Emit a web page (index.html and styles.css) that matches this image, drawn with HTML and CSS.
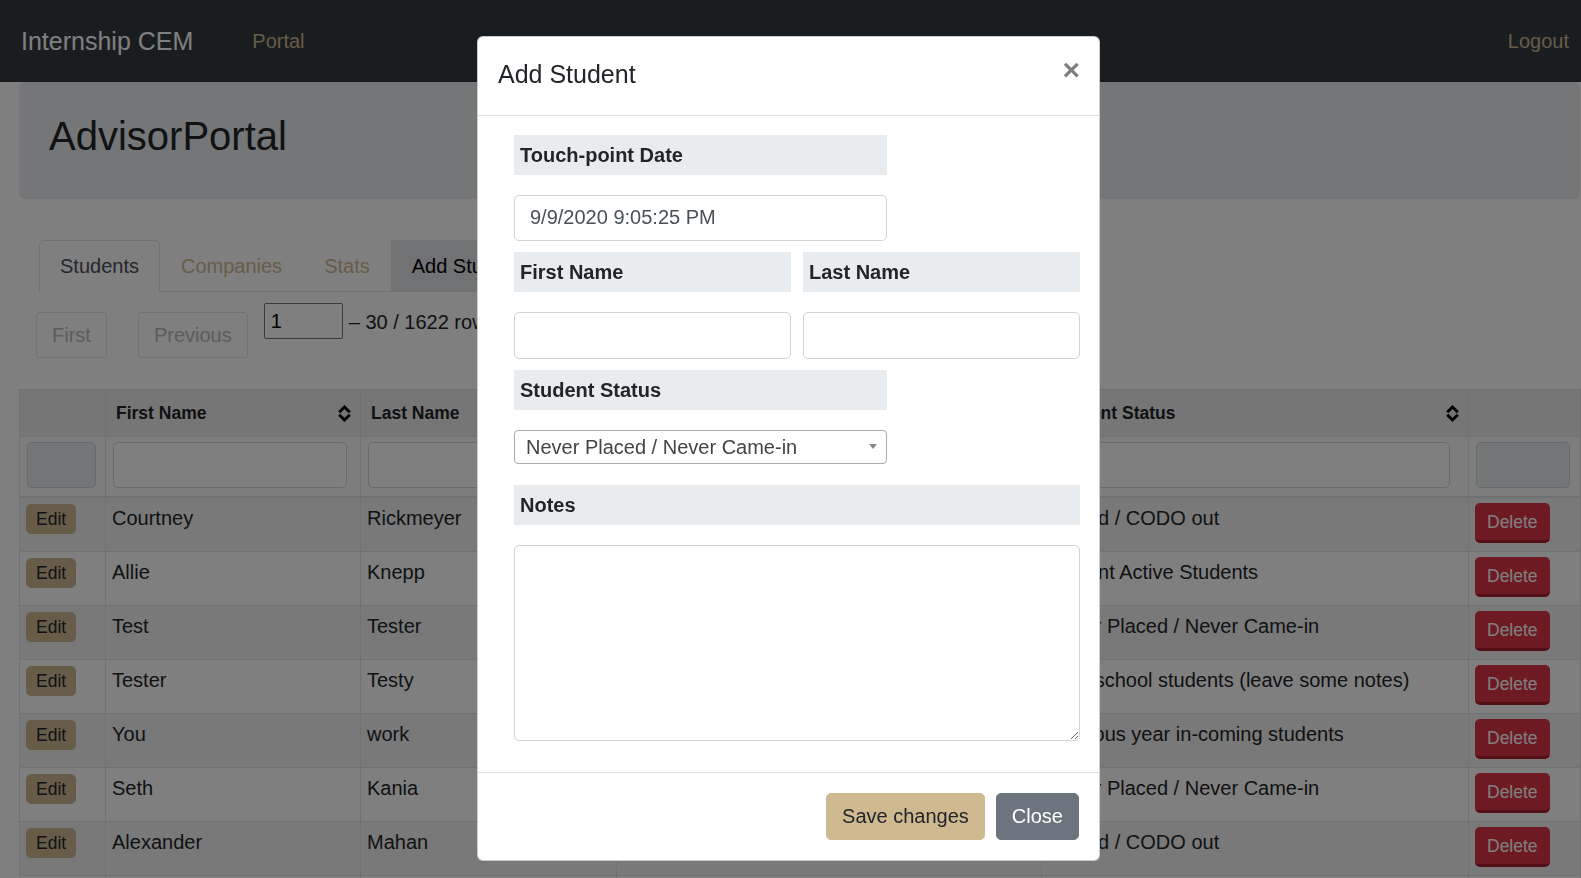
FILE: index.html
```html
<!DOCTYPE html>
<html lang="en">
<head>
<meta charset="utf-8">
<title>AdvisorPortal</title>
<link rel="stylesheet" href="styles.css">
</head>
<body>
<nav class="topbar">
  <a class="brand" href="#">Internship CEM</a>
  <a class="top-link" href="#">Portal</a>
  <a class="top-link logout" href="#">Logout</a>
</nav>
<main class="page">
  <div class="jumbo"><h1 class="jumbo-title">AdvisorPortal</h1></div>
  <ul class="tabs">
    <li class="tab active">Students</li>
    <li class="tab">Companies</li>
    <li class="tab">Stats</li>
    <li class="tab add">Add Student</li>
  </ul>
  <div class="pager">
    <button class="pg-btn">First</button>
    <button class="pg-btn prev">Previous</button>
    <input class="pg-input" value="1">
    <span class="pg-text">– 30 / 1622 rows</span>
  </div>
  <table class="grid">
    <colgroup>
      <col class="c-act"><col class="c-first"><col class="c-last"><col class="c-date"><col class="c-status"><col class="c-del">
    </colgroup>
    <thead>
      <tr class="head-row">
        <th></th>
        <th><div class="th-in"><span>First Name</span><svg class="sort" viewBox="0 0 15 19"><path d="M2.2 8.2 L7.5 3 L12.8 8.2 M2.2 10.8 L7.5 16 L12.8 10.8" fill="none" stroke="#000" stroke-width="3"/></svg></div></th>
        <th><div class="th-in"><span>Last Name</span><svg class="sort" viewBox="0 0 15 19"><path d="M2.2 8.2 L7.5 3 L12.8 8.2 M2.2 10.8 L7.5 16 L12.8 10.8" fill="none" stroke="#000" stroke-width="3"/></svg></div></th>
        <th><div class="th-in"><span>Touch-point Date</span><svg class="sort" viewBox="0 0 15 19"><path d="M2.2 8.2 L7.5 3 L12.8 8.2 M2.2 10.8 L7.5 16 L12.8 10.8" fill="none" stroke="#000" stroke-width="3"/></svg></div></th>
        <th><div class="th-in"><span>Student Status</span><svg class="sort" viewBox="0 0 15 19"><path d="M2.2 8.2 L7.5 3 L12.8 8.2 M2.2 10.8 L7.5 16 L12.8 10.8" fill="none" stroke="#000" stroke-width="3"/></svg></div></th>
        <th></th>
      </tr>
      <tr class="filter-row">
        <td><input class="f-input dis w-act" disabled></td>
        <td><input class="f-input w-name"></td>
        <td><input class="f-input w-name"></td>
        <td><input class="f-input w-date"></td>
        <td><input class="f-input w-status"></td>
        <td><input class="f-input dis w-del" disabled></td>
      </tr>
    </thead>
    <tbody>
      <tr><td><button class="btn-edit">Edit</button></td><td>Courtney</td><td>Rickmeyer</td><td>9/1/2020 10:12:40 AM</td><td>Placed / CODO out</td><td><button class="btn-del">Delete</button></td></tr>
      <tr><td><button class="btn-edit">Edit</button></td><td>Allie</td><td>Knepp</td><td>9/1/2020 11:03:15 AM</td><td>Current Active Students</td><td><button class="btn-del">Delete</button></td></tr>
      <tr><td><button class="btn-edit">Edit</button></td><td>Test</td><td>Tester</td><td>9/2/2020 2:45:02 PM</td><td>Never Placed / Never Came-in</td><td><button class="btn-del">Delete</button></td></tr>
      <tr><td><button class="btn-edit">Edit</button></td><td>Tester</td><td>Testy</td><td>9/3/2020 9:30:11 AM</td><td>High school students (leave some notes)</td><td><button class="btn-del">Delete</button></td></tr>
      <tr><td><button class="btn-edit">Edit</button></td><td>You</td><td>work</td><td>9/4/2020 4:18:56 PM</td><td>Previous year in-coming students</td><td><button class="btn-del">Delete</button></td></tr>
      <tr><td><button class="btn-edit">Edit</button></td><td>Seth</td><td>Kania</td><td>9/7/2020 1:05:33 PM</td><td>Never Placed / Never Came-in</td><td><button class="btn-del">Delete</button></td></tr>
      <tr><td><button class="btn-edit">Edit</button></td><td>Alexander</td><td>Mahan</td><td>9/8/2020 3:22:47 PM</td><td>Placed / CODO out</td><td><button class="btn-del">Delete</button></td></tr>
      <tr class="tail-row"><td></td><td></td><td></td><td></td><td></td><td></td></tr>
    </tbody>
  </table>
</main>

<div class="backdrop"></div>
<div class="modal-wrap">
  <div class="modal">
    <div class="m-head">
      <h5 class="m-title">Add Student</h5>
      <button class="m-close" aria-label="Close">×</button>
    </div>
    <div class="m-body">
      <div class="lbl short">Touch-point Date</div>
      <input class="ctl date" value="9/9/2020 9:05:25 PM">
      <div class="name-row">
        <div>
          <div class="lbl">First Name</div>
          <input class="ctl name">
        </div>
        <div>
          <div class="lbl">Last Name</div>
          <input class="ctl name">
        </div>
      </div>
      <div class="lbl short">Student Status</div>
      <div class="sel"><span>Never Placed / Never Came-in</span><span class="caret"></span></div>
      <div class="lbl">Notes</div>
      <textarea class="ctl notes"></textarea>
    </div>
    <div class="m-foot">
      <button class="btn btn-save">Save changes</button>
      <button class="btn btn-close">Close</button>
    </div>
  </div>
</div>
</body>
</html>
```

FILE: styles.css
```css
* { box-sizing: border-box; }

html, body { overflow: hidden; }

body {
  margin: 0;
  font-family: "Liberation Sans", Arial, Helvetica, sans-serif;
  font-size: 20px;
  line-height: 1.5;
  color: #212529;
  background: #fff;
}

/* top navigation */
.topbar {
  height: 82px;
  background: #343a40;
  display: flex;
  align-items: center;
  padding: 0 12px 0 21px;
}
.brand {
  font-size: 25px;
  line-height: 37.5px;
  color: #fff;
  text-decoration: none;
  margin-top: 2px;
}
.top-link {
  color: #cfb991;
  text-decoration: none;
  line-height: 30px;
  margin-left: 59px;
}
.top-link.logout { margin-left: auto; }

/* page */
.page {
  padding-left: 19px;
  width: 1580px;
}
.jumbo {
  height: 117px;
  background: #e9ecef;
  border-radius: 6px;
  padding: 30px 30px 0;
}
.jumbo-title {
  margin: 0;
  font-size: 40px;
  font-weight: 400;
  line-height: 48px;
}

.tabs {
  list-style: none;
  margin: 41px 0 0 20px;
  padding: 0;
  display: flex;
  width: max-content;
  border-bottom: 1px solid #dee2e6;
}
.tab {
  padding: 10px 20px;
  line-height: 30px;
  border: 1px solid transparent;
  border-radius: 5px 5px 0 0;
  margin-bottom: -1px;
  color: #cfb991;
}
.tab.active {
  color: #495057;
  background: #fff;
  border-color: #dee2e6 #dee2e6 #fff;
}
.tab.add {
  color: #000;
  background: #e2e4e6;
  border-color: #e2e4e6;
  border-radius: 0;
}

.pager {
  display: flex;
  align-items: flex-start;
  margin: 11px 0 0 17px;
}
.pg-btn {
  margin-top: 9px;
  height: 46px;
  padding: 0 15px;
  font: inherit;
  line-height: 30px;
  color: #b6babe;
  background: #fff;
  border: 1px solid #e3e5e7;
  border-radius: 3px;
}
.pg-btn.prev { margin-left: 31px; }
.pg-input {
  margin-left: 16px;
  width: 79px;
  height: 36px;
  padding: 0 6px;
  font: inherit;
  color: #000;
  border: 1px solid #767676;
  border-radius: 2px;
}
.pg-text {
  margin: 4px 0 0 6px;
  line-height: 30px;
}

/* table */
.grid {
  margin-top: 31px;
  width: 1561px;
  border-collapse: collapse;
  table-layout: fixed;
}
.c-act { width: 86px; }
.c-first { width: 255px; }
.c-last { width: 256px; }
.c-date { width: 425px; }
.c-status { width: 427px; }
.c-del { width: 112px; }

.grid th, .grid td { border: 1px solid #dee2e6; }

.head-row th {
  height: 47px;
  padding: 0 8px 0 10px;
  background: #ececec;
  font-size: 17.5px;
  font-weight: 700;
  line-height: 26px;
  text-align: left;
  vertical-align: middle;
}
.th-in {
  display: flex;
  justify-content: space-between;
  align-items: center;
}
.sort { width: 15px; height: 19px; flex: none; }

.filter-row td {
  padding: 5px 0 8px 7px;
  background: #fafafa;
  border-bottom: 2px solid #dee2e6;
}
.f-input {
  display: block;
  height: 46px;
  border: 1px solid #ced4da;
  border-radius: 5px;
  background: #fff;
  font: inherit;
}
.f-input.dis { background: #e9ecef; }
.w-act { width: 69px; }
.w-name { width: 234px; }
.w-date { width: 401px; }
.w-status { width: 401px; }
.w-del { width: 94px; }

tbody td {
  padding: 6px;
  vertical-align: top;
  line-height: 28px;
  white-space: nowrap;
  overflow: hidden;
}
tbody tr:nth-child(odd) td { background: #f2f2f2; }
.tail-row td { height: 54px; }

.btn-edit {
  display: block;
  height: 30px;
  padding: 0 9px;
  font-family: inherit;
  font-size: 17.5px;
  line-height: 28px;
  color: #212529;
  background: #cfb991;
  border: 1px solid #cfb991;
  border-radius: 5px;
}
.btn-del {
  display: block;
  height: 40px;
  margin-top: -1px;
  margin-bottom: 2px;
  padding: 0 11px;
  font-family: inherit;
  font-size: 17.5px;
  line-height: 35px;
  color: #fff;
  background: #dc3545;
  border: 1px solid #dc3545;
  border-bottom: 3px solid #a91e2c;
  border-radius: 5px;
}

/* modal */
.backdrop {
  position: fixed;
  inset: 0;
  background: rgba(0, 0, 0, 0.5);
}
.modal-wrap {
  position: fixed;
  inset: 0;
  display: flex;
  justify-content: center;
  align-items: flex-start;
  padding: 36px 4px 0 0;
}
.modal {
  width: 623px;
  background: #fff;
  border: 1px solid rgba(0, 0, 0, 0.2);
  border-radius: 6px;
}
.m-head {
  display: flex;
  align-items: flex-start;
  justify-content: space-between;
  padding: 20px;
  border-bottom: 1px solid #dee2e6;
}
.m-title {
  margin: -1px 0 1px;
  font-size: 25px;
  font-weight: 400;
  line-height: 37.5px;
}
.m-close {
  margin: -2px -1px 0 0;
  padding: 0;
  background: none;
  border: 0;
  font-family: inherit;
  font-size: 30px;
  font-weight: 700;
  line-height: 1;
  color: #000;
  opacity: 0.5;
}
.m-body {
  padding: 19px 19px 31px 36px;
}
.lbl {
  height: 40px;
  line-height: 40px;
  padding: 0 6px;
  background: #e9ecef;
  font-weight: 700;
  margin-bottom: 20px;
}
.lbl.short { width: 373px; }
.ctl {
  display: block;
  width: 100%;
  height: 46px;
  padding: 0 15px;
  font: inherit;
  color: #495057;
  background: #fff;
  border: 1px solid #ced4da;
  border-radius: 5px;
  margin-bottom: 11px;
}
.ctl.date { width: 373px; }
.ctl.name { height: 47px; }
.name-row {
  display: grid;
  grid-template-columns: 1fr 1fr;
  column-gap: 12px;
}
.sel {
  width: 373px;
  height: 34px;
  display: flex;
  align-items: center;
  justify-content: space-between;
  padding: 0 9px 0 11px;
  color: #444;
  border: 1px solid #aaa;
  border-radius: 4px;
  margin-bottom: 21px;
}
.caret {
  width: 0;
  height: 0;
  border-top: 5px solid #888;
  border-left: 4.5px solid transparent;
  border-right: 4.5px solid transparent;
}
.ctl.notes {
  height: 196px;
  margin-bottom: 0;
  padding: 7px 15px;
  resize: both;
}
.m-foot {
  display: flex;
  justify-content: flex-end;
  gap: 11px;
  padding: 20px;
  border-top: 1px solid #dee2e6;
}
.btn {
  font: inherit;
  line-height: 30px;
  padding: 7.5px 15px;
  border: 1px solid transparent;
  border-radius: 5px;
}
.btn-save {
  color: #212529;
  background: #cfb991;
  border-color: #cfb991;
}
.btn-close {
  color: #fff;
  background: #6c757d;
  border-color: #6c757d;
}
```
